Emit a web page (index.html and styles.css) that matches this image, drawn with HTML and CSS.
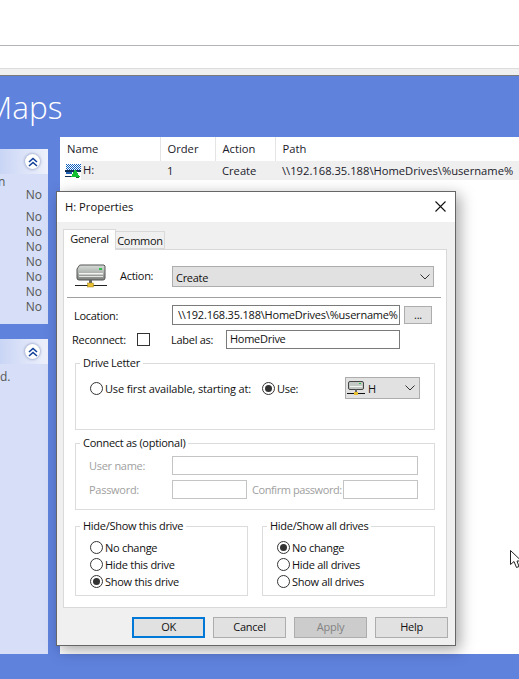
FILE: index.html
```html
<!DOCTYPE html>
<html lang="en">
<head>
    <meta charset="UTF-8">
    <meta name="viewport" content="width=device-width, initial-scale=1.0">
    <title>Drive Maps</title>
    <link rel="stylesheet" href="styles.css">
</head>
<body>
    <div class="toolbar-top"></div>
    <div class="toolbar-address"></div>
    <div class="toolbar-strip"></div>

    <div class="main">
        <h1 class="page-title">Maps</h1>
        <div class="columns">
            <div class="sidebar">
                <div class="side-panel side-panel-first">
                    <div class="side-head"><span class="collapse-btn"><svg width="10" height="10" viewBox="0 0 10 10"><path d="M1 5 L5 1.5 L9 5 M1 9 L5 5.5 L9 9" fill="none" stroke="#123f9a" stroke-width="1.6"/></svg></span></div>
                    <div class="side-row side-row-top"><span class="cut">n</span></div>
                    <div class="side-row side-row-first">No</div>
                    <div class="side-list">
                        <div class="side-row">No</div>
                        <div class="side-row">No</div>
                        <div class="side-row">No</div>
                        <div class="side-row">No</div>
                        <div class="side-row">No</div>
                        <div class="side-row">No</div>
                        <div class="side-row">No</div>
                    </div>
                </div>
                <div class="side-panel side-panel-second">
                    <div class="side-head"><span class="collapse-btn"><svg width="10" height="10" viewBox="0 0 10 10"><path d="M1 5 L5 1.5 L9 5 M1 9 L5 5.5 L9 9" fill="none" stroke="#123f9a" stroke-width="1.6"/></svg></span></div>
                    <div class="side-note">d.</div>
                </div>
            </div>
            <div class="content">
                <table class="drive-table">
                    <thead>
                        <tr>
                            <th class="col-name">Name</th>
                            <th class="col-order">Order</th>
                            <th class="col-action">Action</th>
                            <th>Path</th>
                        </tr>
                    </thead>
                    <tbody>
                        <tr>
                            <td class="name-cell">
                                <div class="name-wrap">
                                    <svg class="row-icon" width="16" height="16" viewBox="0 0 16 16" shape-rendering="crispEdges">
                                        <defs><pattern id="dither" width="2" height="2" patternUnits="userSpaceOnUse"><rect width="2" height="2" fill="#ffffff"/><rect width="1" height="1" fill="#1060c0"/><rect x="1" y="1" width="1" height="1" fill="#1060c0"/></pattern></defs>
                                        <rect x="1" y="1" width="15" height="6" fill="url(#dither)"/>
                                        <rect x="0" y="7" width="16" height="2" fill="#10305a"/>
                                        <rect x="1" y="9" width="6" height="2" fill="#2060b0"/>
                                        <rect x="0" y="13" width="6" height="1" fill="#10305a"/>
                                        <path d="M10 6 L15 14 L6 14 Z" fill="#10c030"/>
                                        <rect x="11" y="14" width="3" height="1" fill="#0a7020"/>
                                    </svg>
                                    <span class="name-text">H:</span>
                                </div>
                            </td>
                            <td>1</td>
                            <td>Create</td>
                            <td>\\192.168.35.188\HomeDrives\%username%</td>
                        </tr>
                    </tbody>
                </table>
            </div>
        </div>
        <div class="bottom-band"></div>
    </div>

    <!-- cursor sits over the empty table area -->
    <svg class="cursor" width="10" height="20" viewBox="0 0 10 20"><path d="M0.5 0.5 L0.5 14.5 L4 11.5 L6.5 17.5 L9 16.5 L7 11 L11.5 11 Z" fill="#fff" stroke="#222" stroke-width="1"/></svg>

    <div class="dialog">
        <div class="dialog-title">
            <span>H: Properties</span>
            <svg class="close-x" width="11" height="11" viewBox="0 0 11 11"><path d="M0.5 0.5 L10.5 10.5 M10.5 0.5 L0.5 10.5" stroke="#111" stroke-width="1.1" fill="none"/></svg>
        </div>
        <div class="dialog-body">
            <div class="tabs">
                <div class="tab tab-active">General</div>
                <div class="tab">Common</div>
            </div>
            <div class="tab-panel">
                <div class="action-row">
                    <svg class="drive-icon" width="32" height="32" viewBox="0 0 32 32">
                        <defs><linearGradient id="bodyfill" x1="0" y1="0" x2="0" y2="1"><stop offset="0" stop-color="#d8dcd8"/><stop offset="0.5" stop-color="#b0b4b0"/><stop offset="1" stop-color="#7c807c"/></linearGradient></defs>
                        <path d="M4 7 Q4 6 6 6 L29 6 L30 7 L30 19 Q30 21 28 21 L4 21 Q2 21 2 19 L2 10 Z" fill="url(#bodyfill)" stroke="#555" stroke-width="1"/>
                        <rect x="4" y="14" width="24" height="1.5" fill="#f2f2f2"/>
                        <rect x="4" y="17" width="24" height="1" fill="#e4e4e4"/>
                        <rect x="24" y="9" width="3" height="2" fill="#30c050"/>
                        <rect x="14" y="21" width="3" height="4" fill="#666"/>
                        <rect x="0" y="26" width="32" height="1" fill="#222" />
                        <rect x="12.5" y="24" width="6" height="4" fill="#e8c030" stroke="#a08020" stroke-width="0.5"/>
                    </svg>
                    <label class="action-label">Action:</label>
                    <div class="combo combo-action"><span>Create</span><svg class="combo-arrow" width="10" height="6" viewBox="0 0 10 6"><path d="M0.5 0.5 L5 5 L9.5 0.5" fill="none" stroke="#333" stroke-width="1"/></svg></div>
                </div>
                <div class="separator"></div>
                <div class="location-row">
                    <label class="location-label">Location:</label>
                    <div class="field field-location">\\192.168.35.188\HomeDrives\%username%</div>
                    <div class="btn btn-browse">...</div>
                </div>
                <div class="reconnect-row">
                    <label class="reconnect-label">Reconnect:</label>
                    <span class="check"></span>
                    <label class="labelas-label">Label as:</label>
                    <div class="field field-labelas">HomeDrive</div>
                </div>

                <fieldset class="group group-letter">
                    <legend>Drive Letter</legend>
                    <div class="letter-row">
                        <span class="radio"></span><span class="radio-text radio-text-first">Use first available, starting at:</span>
                        <span class="radio radio-on"></span><span class="radio-text radio-text-use">Use:</span>
                        <div class="combo combo-letter">
                            <svg width="18" height="16" viewBox="0 0 18 16">
                                <rect x="1.5" y="1.5" width="15" height="8" rx="1.5" fill="#c4c8c4" stroke="#444"/>
                                <rect x="3" y="6" width="12" height="1" fill="#f4f4f4"/>
                                <rect x="12" y="3" width="2" height="1" fill="#30c050"/>
                                <rect x="8" y="9.5" width="2" height="3" fill="#666"/>
                                <rect x="0" y="13" width="18" height="1" fill="#111"/>
                                <rect x="7" y="12" width="4" height="3" fill="#e8c030"/>
                            </svg>
                            <span class="combo-letter-text">H</span>
                            <svg class="combo-arrow" width="10" height="6" viewBox="0 0 10 6"><path d="M0.5 0.5 L5 5 L9.5 0.5" fill="none" stroke="#333" stroke-width="1"/></svg>
                        </div>
                    </div>
                </fieldset>

                <fieldset class="group group-connect">
                    <legend>Connect as (optional)</legend>
                    <div class="connect-row connect-row-user">
                        <label class="connect-label">User name:</label>
                        <div class="field-off field-user"></div>
                    </div>
                    <div class="connect-row">
                        <label class="connect-label">Password:</label>
                        <div class="field-off field-pass"></div>
                        <label class="confirm-label">Confirm password:</label>
                        <div class="field-off field-confirm"></div>
                    </div>
                </fieldset>

                <div class="hide-groups">
                    <fieldset class="group group-hide">
                        <legend>Hide/Show this drive</legend>
                        <div class="radio-line"><span class="radio"></span><span class="radio-text">No change</span></div>
                        <div class="radio-line"><span class="radio"></span><span class="radio-text">Hide this drive</span></div>
                        <div class="radio-line"><span class="radio radio-on"></span><span class="radio-text">Show this drive</span></div>
                    </fieldset>
                    <fieldset class="group group-hide">
                        <legend>Hide/Show all drives</legend>
                        <div class="radio-line"><span class="radio radio-on"></span><span class="radio-text">No change</span></div>
                        <div class="radio-line"><span class="radio"></span><span class="radio-text">Hide all drives</span></div>
                        <div class="radio-line"><span class="radio"></span><span class="radio-text">Show all drives</span></div>
                    </fieldset>
                </div>
            </div>
            <div class="dialog-buttons">
                <div class="btn btn-main btn-ok">OK</div>
                <div class="btn btn-main">Cancel</div>
                <div class="btn btn-main btn-off">Apply</div>
                <div class="btn btn-main">Help</div>
            </div>
        </div>
    </div>
</body>
</html>
```

FILE: styles.css
```css
* {
    box-sizing: border-box;
}
html, body {
    height: 100%;
}
body {
    font-family: "Open Sans", Arial, sans-serif;
    font-size: 11px;
    color: #111;
    background-color: #fff;
    margin: 0;
    width: 519px;
    height: 679px;
    overflow: hidden;
    display: flex;
    flex-direction: column;
}

/* browser chrome rows */
.toolbar-top {
    height: 46px;
    border-bottom: 1px solid #b4b4b8;
}
.toolbar-address {
    height: 23px;
    border-bottom: 1px solid #dcdcdc;
}
.toolbar-strip {
    height: 7px;
    background-color: #f0f0f0;
    border-bottom: 1px solid #7a7a7a;
}

.main {
    flex: 1;
    background-color: #5f82dd;
    display: flex;
    flex-direction: column;
    overflow: hidden;
}
.page-title {
    margin: 0 0 0 -15px;
    height: 61px;
    padding-top: 11px;
    font-weight: 300;
    font-size: 31.5px;
    line-height: 40px;
    color: #fff;
}
.columns {
    flex: 1;
    display: flex;
}
.sidebar {
    width: 48px;
    padding-top: 12px;
    margin-right: 12px;
    display: flex;
    flex-direction: column;
    gap: 15px;
}
.side-panel {
    background-color: #d6dff7;
    border-top-right-radius: 5px;
    color: #555;
    font-size: 12px;
}
.side-panel-first {
    height: 175px;
}
.side-panel-second {
    flex: 1;
}
.side-head {
    height: 25px;
    background: linear-gradient(to right, #c9d5f5, #eef1fc);
    display: flex;
    align-items: center;
    justify-content: flex-end;
    padding-right: 8px;
}
.collapse-btn {
    width: 15px;
    height: 15px;
    border-radius: 50%;
    background-color: #fff;
    box-shadow: 0 0 3px rgba(40, 60, 120, 0.6);
    display: flex;
    align-items: center;
    justify-content: center;
}
.side-row {
    height: 15px;
    line-height: 15px;
    text-align: right;
    padding-right: 6px;
}
.side-row-top {
    height: 6px;
    text-align: left;
    padding-top: 0;
    line-height: 16px;
}
.cut {
    margin-left: -2px;
}
.side-row-first {
    margin-top: 7px;
}
.side-list {
    margin-top: 7px;
}
.side-note {
    padding-top: 5px;
    line-height: 16px;
}

.content {
    flex: 1;
    background-color: #fff;
}
.drive-table {
    border-collapse: collapse;
    width: 100%;
    table-layout: fixed;
    font-size: 11.2px;
    color: #1a1a2a;
}
.drive-table th {
    height: 24px;
    font-weight: 400;
    text-align: left;
    padding: 0 0 2px 7px;
    border-right: 1px solid #e4e4e4;
}
.drive-table th:last-child {
    border-right: none;
}
.drive-table td {
    height: 19px;
    padding: 0 0 1px 7px;
    background-color: #efefef;
    white-space: nowrap;
}
.drive-table td.name-cell {
    padding: 0;
    background-color: #fff;
}
.col-name {
    width: 100px;
}
.col-order {
    width: 55px;
}
.col-action {
    width: 60px;
}
.name-wrap {
    display: flex;
    height: 19px;
    align-items: center;
    padding-left: 5px;
}
.row-icon {
    flex: none;
}
.name-text {
    flex: 1;
    height: 19px;
    line-height: 18px;
    padding-left: 2px;
    background-color: #efefef;
}
.bottom-band {
    height: 25px;
}
.cursor {
    position: absolute;
    left: 510px;
    top: 550px;
    overflow: hidden;
}

/* properties dialog over the table */
.dialog {
    position: absolute;
    left: 56px;
    top: 191px;
    width: 400px;
    height: 455px;
    border: 1px solid #666;
    background-color: #fff;
    box-shadow: 4px 4px 14px rgba(0, 0, 0, 0.35);
    display: flex;
    flex-direction: column;
    letter-spacing: -0.28px;
}
.dialog-title {
    height: 30px;
    display: flex;
    align-items: center;
    justify-content: space-between;
    padding: 0 9px 2px 8px;
    flex: none;
    font-size: 11.2px;
    letter-spacing: 0;
}
.dialog-body {
    flex: 1;
    background-color: #f0f0f0;
    padding: 7px 8px 0 6px;
    display: flex;
    flex-direction: column;
}
.tabs {
    display: flex;
    height: 21px;
    align-items: flex-end;
    position: relative;
    z-index: 1;
}
.tab {
    height: 18px;
    width: 49px;
    text-align: center;
    line-height: 17px;
    background-color: #f0f0f0;
    border: 1px solid #d9d9d9;
    border-left: none;
    margin-bottom: 1px;
}
.tab-active {
    width: 53px;
    height: 21px;
    line-height: 18px;
    background-color: #fff;
    border-left: 1px solid #d9d9d9;
    border-bottom: none;
    margin-bottom: 0;
}
.tab-panel {
    height: 359px;
    background-color: #fff;
    border: 1px solid #d9d9d9;
    margin-top: -1px;
    padding-top: 9px;
}
.action-row {
    display: flex;
    align-items: center;
    height: 32px;
    padding-left: 11px;
}
.drive-icon {
    flex: none;
}
.action-label {
    margin-left: 13px;
    width: 52px;
}
.combo {
    border: 1px solid #adadad;
    background-color: #e1e1e1;
    display: flex;
    align-items: center;
    justify-content: space-between;
}
.combo-action {
    width: 262px;
    height: 21px;
    padding: 1px 3px 0 3px;
    margin-top: 3px;
}
.combo-letter {
    width: 75px;
    height: 22px;
    margin-left: auto;
    padding: 0 4px 0 1px;
    justify-content: flex-start;
}
.combo-letter-text {
    margin-left: 3px;
}
.combo-letter .combo-arrow {
    margin-left: auto;
}
.separator {
    height: 1px;
    background-color: #a0a0a0;
    margin: 6px 5px 0 3px;
}
.location-row,
.reconnect-row {
    display: flex;
    align-items: center;
}
.location-row {
    margin-top: 7px;
}
.location-label {
    margin-left: 10px;
    width: 98px;
}
.field {
    height: 20px;
    border: 1px solid #7a7a7a;
    background-color: #fff;
    line-height: 18px;
    padding-left: 3px;
    white-space: nowrap;
    overflow: hidden;
}
.field-location {
    width: 228px;
    padding-left: 5px;
    letter-spacing: -0.2px;
}
.btn {
    border: 1px solid #adadad;
    background-color: #e1e1e1;
    text-align: center;
}
.btn-browse {
    width: 28px;
    height: 18px;
    line-height: 16px;
    margin-left: 4px;
}
.reconnect-row {
    margin-top: 5px;
}
.reconnect-label {
    margin-left: 8px;
    width: 65px;
}
.check {
    width: 13px;
    height: 13px;
    border: 1px solid #333;
    background-color: #fff;
}
.labelas-label {
    margin-left: 21px;
    width: 55px;
}
.field-labelas {
    width: 174px;
    height: 19px;
    line-height: 16px;
}

.group {
    margin: 7px 0 0 11px;
    padding: 0;
    border: 1px solid #dcdcdc;
    min-width: 0;
}
.group legend {
    margin-left: 4px;
    padding: 0 3px;
    line-height: 14px;
}
.group-letter {
    width: 360px;
    height: 74px;
}
.letter-row {
    display: flex;
    align-items: center;
    padding: 7px 14px 0 14px;
}
.radio {
    width: 13px;
    height: 13px;
    border: 1px solid #333;
    border-radius: 50%;
    background-color: #fff;
    flex: none;
    display: flex;
    align-items: center;
    justify-content: center;
}
.radio-on::after {
    content: "";
    width: 7px;
    height: 7px;
    border-radius: 50%;
    background-color: #333;
}
.radio-text {
    margin-left: 2px;
}
.radio-text-first {
    width: 157px;
    letter-spacing: -0.15px;
}
.group-connect {
    width: 360px;
    height: 74px;
    margin-top: 6px;
    color: #a0a0a0;
}
.group-connect legend {
    color: #111;
}
.connect-row {
    display: flex;
    align-items: center;
    margin-top: 5px;
    padding-left: 13px;
}
.connect-row-user {
    margin-top: 6px;
}
.connect-label {
    width: 83px;
}
.field-off {
    height: 19px;
    border: 1px solid #c4c4c4;
    background-color: #fff;
}
.field-user {
    width: 246px;
}
.field-pass {
    width: 75px;
}
.confirm-label {
    margin-left: 5px;
    width: 91px;
    white-space: nowrap;
    letter-spacing: -0.42px;
}
.field-confirm {
    width: 75px;
}
.hide-groups {
    display: flex;
    gap: 14px;
    margin-left: 11px;
    margin-top: 9px;
}
.hide-groups .group {
    margin: 0;
    width: 173px;
    height: 77px;
    padding: 6px 0 0;
}
.radio-line {
    display: flex;
    align-items: center;
    height: 17px;
    margin-left: 14px;
}
.dialog-buttons {
    display: flex;
    justify-content: flex-end;
    gap: 8px;
    margin-top: 9px;
    margin-right: -1px;
}
.btn-main {
    width: 73px;
    height: 21px;
    line-height: 18px;
}
.btn-ok {
    border: 2px solid #0078d7;
    line-height: 16px;
}
.btn-off {
    background-color: #cccccc;
    color: #838383;
}
```
